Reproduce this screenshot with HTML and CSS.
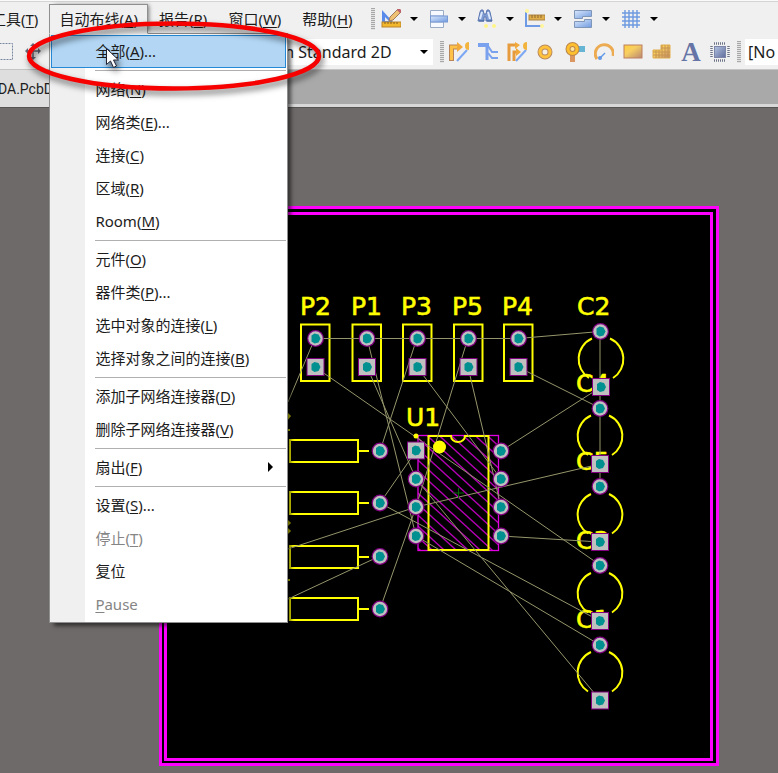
FILE: index.html
```html
<!DOCTYPE html>
<html lang="zh-CN">
<head>
<meta charset="utf-8">
<title>PCB</title>
<link rel="stylesheet" href="styles.css">
</head>
<body>
<svg class="defs" width="0" height="0" aria-hidden="true">
  <defs>
    <linearGradient id="blue" x1="0" y1="0" x2="1" y2="1"><stop offset="0" stop-color="#dbe8fb"/><stop offset="1" stop-color="#6f9ae0"/></linearGradient>
    <linearGradient id="gold" x1="0" y1="0" x2="1" y2="1"><stop offset="0" stop-color="#ffcf3a"/><stop offset=".4" stop-color="#f7cf62"/><stop offset="1" stop-color="#b98673"/></linearGradient>
    <linearGradient id="slate" x1="0" y1="0" x2="1" y2="1"><stop offset="0" stop-color="#b3c3e0"/><stop offset="1" stop-color="#5f6c9c"/></linearGradient>
    <pattern id="hatch" width="12" height="11" patternUnits="userSpaceOnUse"><path d="M-12 -11L24 22M-12 0L12 22M0 -11L24 11" stroke="#b400b4" stroke-width="1.3"/></pattern>
    <g id="pad"><circle r="8.4" fill="#800080"/><circle r="7.2" fill="#c0c0c0"/><path d="M-4-3L-1-5L3-4L5 0L3 4L-1 5L-4 3Z" fill="#009090"/></g>
    <g id="padS"><rect x="-9" y="-9" width="18" height="18" fill="#800080"/><rect x="-8" y="-8" width="16" height="16" fill="#c0c0c0"/><path d="M-4-3L-1-5L3-4L5 0L3 4L-1 5L-4 3Z" fill="#009090"/></g>
    <g id="header"><rect x="-14.5" y="-14" width="28.500" height="56.500" fill="none" stroke="#ff0" stroke-width="2"/></g>
    <g id="cap" fill="none" stroke="#ff0" stroke-width="2"><path d="M-9-20.500A22.500 22.500 0 0 0 -12 19M9-20.500A22.500 22.500 0 0 1 12 19"/></g>
  </defs>
</svg>

<header class="chrome">
  <div class="menubar">
    <nav class="menus">
      <button class="menu-title">工具(<u>T</u>)</button>
      <div class="menu-host">
        <button class="menu-title open" aria-expanded="true">自动布线(<u>A</u>)</button>
        <ul class="menu">
          <li><button class="current">全部(<u>A</u>)...</button></li>
          <li class="sep"></li>
          <li><button>网络(<u>N</u>)</button></li>
          <li><button>网络类(<u>E</u>)...</button></li>
          <li><button>连接(<u>C</u>)</button></li>
          <li><button>区域(<u>R</u>)</button></li>
          <li><button>Room(<u>M</u>)</button></li>
          <li class="sep"></li>
          <li><button>元件(<u>O</u>)</button></li>
          <li><button>器件类(<u>P</u>)...</button></li>
          <li><button>选中对象的连接(<u>L</u>)</button></li>
          <li><button>选择对象之间的连接(<u>B</u>)</button></li>
          <li class="sep"></li>
          <li><button>添加子网络连接器(<u>D</u>)</button></li>
          <li><button>删除子网络连接器(<u>V</u>)</button></li>
          <li class="sep"></li>
          <li><button class="more">扇出(<u>F</u>)</button></li>
          <li class="sep"></li>
          <li><button>设置(<u>S</u>)...</button></li>
          <li><button disabled>停止(<u>T</u>)</button></li>
          <li><button>复位</button></li>
          <li><button disabled><u>P</u>ause</button></li>
        </ul>
        <svg class="highlight" viewBox="0 0 310 90" width="310" height="90" aria-hidden="true">
          <ellipse cx="155" cy="43" rx="145" ry="32.500" fill="none" stroke="#f60000" stroke-width="4.500"/>
          <path d="M87.500 35.500V51.500L91.500 48L94.500 54.500L97.500 53L94.500 47H99.500Z" fill="#fff" stroke="#223" stroke-width="1"/>
        </svg>
      </div>
      <button class="menu-title">报告(<u>R</u>)</button>
      <button class="menu-title">窗口(<u>W</u>)</button>
      <button class="menu-title">帮助(<u>H</u>)</button>
    </nav>
    <span class="grip"></span>
    <div class="drop-tools">
      <button class="drop" aria-label="Drawing tools"><svg viewBox="0 0 20 20"><path d="M1 1L12 13H1Z" fill="#5b8bea"/><path d="M4 8L8 12H4Z" fill="#eee"/><path d="M8 12L9 8L17 0L20 3L12 11Z" fill="#efc172" stroke="#a07a5c"/><path d="M17 0L20 3" stroke="#c0626c" stroke-width="3"/><rect x="1" y="13" width="19" height="5" fill="#f3b72e" stroke="#b8842a"/><path d="M4 13v2M7 13v2M10 13v2M13 13v2M16 13v2" stroke="#865f1c"/></svg></button>
      <button class="drop" aria-label="Align"><svg viewBox="0 0 20 20"><path d="M1.500 1.500H14.500V7H1.500ZM1.500 13H14.500V18.500H1.500Z" fill="#f6f9fd" stroke="#9aabc6"/><rect x="1.500" y="7" width="17" height="6" fill="url(#blue)" stroke="#7698d4"/></svg></button>
      <button class="drop" aria-label="Find"><svg viewBox="0 0 20 20"><path d="M3 3L4 1H6L7 5H9L10 1H12L13 3L15 12H9V8H7V12H1Z" fill="#7d9bd2" stroke="#5b76b0"/><path d="M3 10L5 3M11 3L13 10" stroke="#dce8fc" stroke-width="2"/><path d="M2 12H7M10 12H15" stroke="#44639c"/><circle cx="9" cy="17" r="2" fill="#fff58a"/><circle cx="17" cy="17" r="2" fill="#fff58a"/></svg></button>
      <button class="drop" aria-label="Dimensions"><svg viewBox="0 0 20 20"><path d="M1 3V17H16" stroke="#6d99e5" stroke-width="2" fill="none"/><rect x="4" y="6" width="16" height="5" fill="#dfae4b" stroke="#ad8442"/><path d="M7 6v3M10 6v3M13 6v3M16 6v3" stroke="#8b6730"/><circle cx="2" cy="2" r="2" fill="#fff59a"/><circle cx="17" cy="17" r="2" fill="#fff59a"/></svg></button>
      <button class="drop" aria-label="Rooms"><svg viewBox="0 0 20 20"><path d="M1.500 1.500H18.500V7.500H9.500V9.500H1.500Z" fill="url(#blue)" stroke="#8096b8"/><path d="M1.500 12.500H11.500V10.500H18.500V18.500H1.500Z" fill="url(#blue)" stroke="#8096b8"/></svg></button>
      <button class="drop" aria-label="Grid"><svg viewBox="0 0 20 20"><path d="M4 1V19M8 1V19M12 1V19M16 1V19M1 4H19M1 8H19M1 12H19M1 16H19" stroke="#6d9ae0" stroke-width="1.400"/></svg></button>
    </div>
  </div>

  <div class="toolbar">
    <div class="left-tools">
      <button class="tool" aria-label="Select area"><svg viewBox="0 0 20 20"><rect x="1.500" y="1.500" width="16" height="16" fill="none" stroke="#7887a0" stroke-dasharray="2 1"/></svg></button>
      <button class="tool" aria-label="Move"><svg viewBox="0 0 20 20"><path d="M3 9H17M10 2V17" stroke="#667" stroke-width="1.500"/><path d="M10 1l3 3H7ZM10 18l3-3H7ZM2 9l3-3v6ZM18 9l-3-3v6Z" fill="#667"/></svg></button>
    </div>
    <label class="picker"><select aria-label="View configuration"><option>Altium Standard 2D</option></select></label>
    <span class="grip"></span>
    <div class="tools">
      <button class="tool" aria-label="Route"><svg viewBox="0 0 20 20"><path d="M2.500 19V5H9" stroke="#b98458" stroke-width="5" fill="none"/><path d="M2.500 18V5H9" stroke="#ffc247" stroke-width="3" fill="none"/><path d="M8 0L14 5L8 10Z" fill="#f2a93b"/><path d="M8 19L18 8" stroke="#7ca7f2" stroke-width="2"/><path d="M20 0A4 4 0 0 0 20 8Z" fill="#f3b43d"/></svg></button>
      <button class="tool" aria-label="Differential pair"><svg viewBox="0 0 20 20"><path d="M0 3H11" stroke="#79a1ee" stroke-width="4" fill="none"/><path d="M9 3V18" stroke="#79a1ee" stroke-width="3" fill="none"/><path d="M10 4L14 10H20M10 11L14 16H20" fill="none" stroke="#79a1ee" stroke-width="2"/></svg></button>
      <button class="tool" aria-label="Multi route"><svg viewBox="0 0 20 20"><path d="M2 19V3H9M7 19V10H11" stroke="#e69b3f" stroke-width="3" fill="none"/><path d="M8 0L13 3L8 7ZM9 6L14 10L9 14Z" fill="#f2a93b"/><path d="M9 19L19 8" stroke="#7ca7f2" stroke-width="2"/><path d="M20 0A4 4 0 0 0 20 8Z" fill="#f3b43d"/></svg></button>
      <button class="tool" aria-label="Pad"><svg viewBox="0 0 20 20"><circle cx="9" cy="10" r="5" fill="#f5f0e6" stroke="#bc8b62" stroke-width="5"/><circle cx="9" cy="10" r="5" fill="none" stroke="#ffc33b" stroke-width="3"/></svg></button>
      <button class="tool" aria-label="Via"><svg viewBox="0 0 20 20"><path d="M11 4H20V10H11Z" fill="#66b5d5"/><path d="M5 11H10V20H5Z" fill="#dc9660"/><circle cx="7.500" cy="7" r="4.500" fill="#ffe7a1" stroke="#bc864c" stroke-width="5"/><circle cx="7.500" cy="7" r="4.500" fill="none" stroke="#ffc02f" stroke-width="3"/></svg></button>
      <button class="tool" aria-label="Arc"><svg viewBox="0 0 20 20"><path d="M3 17A9 9 0 1 1 19 14" stroke="#ecaa51" stroke-width="3" fill="none"/><path d="M5 17L11 11" stroke="#6399e8" stroke-width="1.500"/><circle cx="6" cy="16" r="2" fill="#6399e8"/></svg></button>
      <button class="tool" aria-label="Fill"><svg viewBox="0 0 20 20"><rect x="1" y="3" width="18" height="13" fill="url(#gold)" stroke="#bd8060"/></svg></button>
      <button class="tool" aria-label="Polygon"><svg viewBox="0 0 20 20"><path d="M1 8H9V3H18V16H1Z" fill="url(#gold)" stroke="#e0ad48"/><path d="M4 8V16M7 8V16M10 3V16M13 3V16M16 3V16M1 10H18M1 13H18M9 6H18" stroke="#c8944e"/></svg></button>
      <button class="tool letter" aria-label="Text">A</button>
      <button class="tool" aria-label="Component"><svg viewBox="0 0 20 20"><rect x="4.500" y="4.500" width="11" height="11" fill="url(#slate)" stroke="#7c87aa"/><path d="M4 1.500H16M4 18.500H16M1.500 4V16M18.500 4V16" stroke="#6d7488" stroke-width="2.500" stroke-dasharray="1 1" fill="none"/></svg></button>
    </div>
    <span class="grip"></span>
    <select class="variant" aria-label="Variant"><option>[No Variations]</option></select>
  </div>
</header>

<div class="tabs"><button class="tab">EDA.PcbDoc</button></div>

<main class="workspace">
  <svg class="board" viewBox="0 107 778 666" role="img" aria-label="PCB">
    <rect x="160.500" y="207.500" width="557" height="557" fill="#000" stroke="#f0f" stroke-width="3"/>
    <rect x="165.500" y="213.500" width="546" height="546" fill="none" stroke="#f0f" stroke-width="3"/>

    <rect x="418" y="435.500" width="80.500" height="115" fill="url(#hatch)" stroke="#e000e0" stroke-width="1.300"/>

    <g class="designator">
      <text x="300" y="315">P2</text><text x="351" y="315">P1</text><text x="401" y="315">P3</text><text x="452" y="315">P5</text><text x="502" y="315">P4</text>
      <text x="406" y="426">U1</text>
      <text x="577" y="315">C2</text><text x="576" y="392">C4</text><text x="576" y="470">C5</text><text x="576" y="549">C3</text><text x="576" y="628">C1</text>
    </g>

    <g>
      <use href="#header" x="315.500" y="338.500"/><use href="#header" x="367" y="338.500"/><use href="#header" x="417.500" y="338.500"/><use href="#header" x="468.500" y="338.500"/><use href="#header" x="518.500" y="338.500"/>
      <use href="#cap" x="601" y="359"/><use href="#cap" x="600" y="436"/><use href="#cap" x="600" y="514.500"/><use href="#cap" x="600" y="593.500"/><use href="#cap" x="600" y="672.500"/>
    </g>
    <g fill="none" stroke="#ff0" stroke-width="2">
      <path d="M290 440H358V462H290ZM358 451H369M290 492H358V514H290ZM358 503H369M290 546H358V568H290ZM358 557H369M290 598H358V620H290ZM358 609H369"/>
      <path d="M428.500 436H451A7 6 0 0 0 465 436H488.500V550H428.500Z"/>
    </g>
    <path d="M287 412L291 416L287 421ZM287 429h3v2h-3ZM287 519L291 523L287 527ZM287 527L291 531L287 535ZM287 579h3v2h-3Z" fill="#cc0"/>

    <path class="net" d="M315 338.500H518L600 331.500V486M315 338L288 402M315 367L600 565M367 338L416 536M367 367L416 479M417 338L380 451M417 367L501 479M468 338L416 507M468 367L501 507M518 367L600 408M601 387L501 451M600 464L416 507L288 549M416 451L380 503L600 621M380 556L288 599M380 609L416 507M416 536L600 645M416 479L600 700M501 536L600 542"/>

    <circle cx="439.500" cy="447" r="6.500" fill="#ff0"/><circle cx="416" cy="436" r="2.500" fill="#ff0"/>
    <path d="M458.500 488V498M453 493H464" stroke="#006a00"/>
    <g>
      <use href="#pad" x="315.500" y="338.500"/><use href="#pad" x="367" y="338.500"/><use href="#pad" x="417.500" y="338.500"/><use href="#pad" x="468.500" y="338.500"/><use href="#pad" x="518.500" y="338.500"/>
      <use href="#padS" x="315.500" y="367"/><use href="#padS" x="367" y="367"/><use href="#padS" x="417.500" y="367"/><use href="#padS" x="468.500" y="367"/><use href="#padS" x="518.500" y="367"/>
      <use href="#pad" x="380" y="451"/><use href="#pad" x="380" y="503"/><use href="#pad" x="380" y="556.500"/><use href="#pad" x="380" y="609"/>
      <use href="#padS" x="416" y="450.500"/><use href="#pad" x="416" y="479"/><use href="#pad" x="416" y="507"/><use href="#pad" x="416" y="536"/>
      <use href="#pad" x="501" y="451"/><use href="#pad" x="501" y="479"/><use href="#pad" x="501" y="507"/><use href="#pad" x="501" y="536"/>
      <use href="#pad" x="600.500" y="331.500"/><use href="#pad" x="600" y="408.500"/><use href="#pad" x="600" y="486.500"/><use href="#pad" x="600" y="565.500"/><use href="#pad" x="600" y="645"/>
      <use href="#padS" x="601" y="387"/><use href="#padS" x="600" y="464"/><use href="#padS" x="600" y="542"/><use href="#padS" x="600" y="621"/><use href="#padS" x="600" y="700.500"/>
    </g>
  </svg>
</main>
</body>
</html>
```
FILE: styles.css
```css
* { box-sizing: border-box; }
body {
  margin: 0;
  min-height: 100vh;
  display: flex;
  flex-direction: column;
  overflow: hidden;
  background: #6e6a69;
  color: #1c1c1c;
  font: 15px/20px "Noto Sans", "Noto Sans CJK SC", sans-serif;
}
button, select {
  font: inherit;
  color: inherit;
  border: 0;
  background: none;
  padding: 0;
  margin: 0;
  white-space: nowrap;
}
u { text-underline-offset: 2px; }
.defs { position: absolute; }

.chrome {
  background: #f0f0f0;
  border-top: 1px solid #fafafa;
  border-bottom: 1px solid #c4c4c4;
}
.menubar, .toolbar, .menus, .drop-tools, .tools, .left-tools { display: flex; align-items: center; }
.menubar {
  height: 34px;
  border-top: 1px solid #d4d4d4;
}
.menus { margin-left: -19px; gap: 1px; flex: none; }
.menu-title {
  height: 30px;
  padding: 0 9px;
  border: 1px solid transparent;
}
.menu-host { position: relative; }
.menu-title.open {
  position: relative;
  z-index: 2;
  border-color: #8f8f8f;
  border-bottom-color: #f0f0f0;
  box-shadow: 3px -1px 4px -2px #777;
}

.menu {
  position: absolute;
  z-index: 1;
  top: 29px;
  left: 0;
  width: 239px;
  margin: 0;
  padding: 1px;
  list-style: none;
  border: 1px solid #8f8f8f;
  background: linear-gradient(90deg, #f0f0f0 35px, #fff 35px);
  box-shadow: 4px 4px 4px -1px rgba(0, 0, 0, .55);
}
.menu button {
  display: block;
  position: relative;
  width: 100%;
  height: 33px;
  padding: 0 0 0 43px;
  border: 1px solid transparent;
  text-align: left;
}
.menu .current { background: #b2d6f4; border: 1px solid #2489d6; }
.menu button:disabled { color: #858585; }
.menu .sep {
  height: 5px;
  margin-left: 44px;
  background: linear-gradient(#b0b0b0, #b0b0b0) 0 2px / 100% 1px no-repeat;
}
.more::after {
  content: "";
  position: absolute;
  top: 10px;
  right: 12px;
  border: 5px solid transparent;
  border-left-color: #000;
  border-right-width: 0;
}
.highlight {
  position: absolute;
  z-index: 3;
  top: 9px;
  left: -30px;
  pointer-events: none;
  filter: drop-shadow(2px 4px 3px rgba(0, 0, 0, .55));
}

.grip {
  flex: none;
  width: 4px;
  height: 22px;
  background: repeating-linear-gradient(#a8a8a8 0 1px, #e4e4e4 1px 2px);
}
.menubar .grip { margin: 0 6px 0 8px; }
.drop-tools { gap: 8px; }
.drop {
  display: flex;
  align-items: center;
  width: 40px;
  justify-content: space-between;
  flex: none;
}
.drop svg, .tool svg { display: block; width: 20px; height: 20px; }
.drop::after, .picker::after {
  content: "";
  border: 4px solid transparent;
  border-top-color: #000;
  border-bottom-width: 0;
}
.drop::after { margin-right: 3px; }

.toolbar { height: 34px; }
.left-tools { flex: none; gap: 8px; margin-left: -5px; width: 165px; }
.tool { flex: none; width: 20px; height: 20px; }
.tools { gap: 9px; margin-left: 5px; flex: none; }
.letter {
  font: bold 27px/20px "Liberation Serif", serif;
  color: #6675a5;
}
.picker { position: relative; flex: none; width: 273px; }
.picker select, .variant {
  appearance: none;
  height: 26px;
  background: #fff;
  font-size: 16px;
}
.picker select { width: 100%; padding-left: 85px; }
.picker::after { position: absolute; top: 11px; right: 5px; }
.toolbar > .grip { margin-left: 7px; }
.variant { margin-left: 4px; padding: 0 0 0 3px; flex: 1; min-width: 0; width: 0; }

.tabs {
  display: flex;
  height: 37px;
  background: #a9a9a9;
  border-bottom: 3px solid #d8d8d8;
}
.tab {
  margin-left: -13px;
  margin-bottom: -3px;
  padding: 0 12px 0 3px;
  background: #dedede;
  font: 14px/20px Roboto, sans-serif;
}
.workspace { flex: 1; border-top: 1px solid #565352; }
.board { display: block; width: 100%; margin-top: -1px; }
.designator {
  font: 25px "DejaVu Sans", sans-serif;
  fill: #ff0;
  stroke: #ff0;
  stroke-width: .6px;
}
.net { fill: none; stroke: #96966c; stroke-width: 1; }
```
